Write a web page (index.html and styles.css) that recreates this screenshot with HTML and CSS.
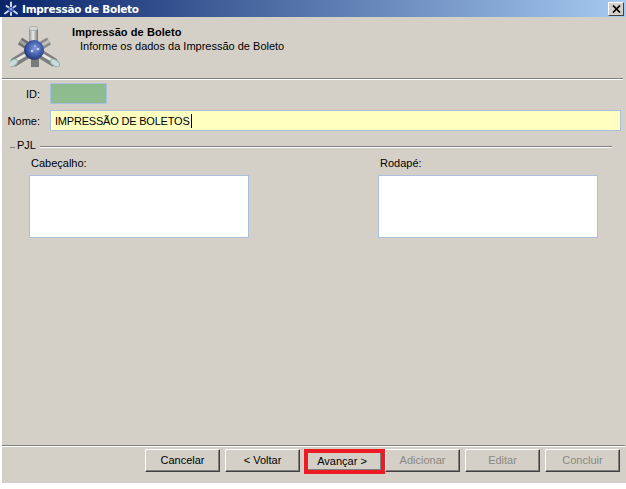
FILE: index.html
```html
<!DOCTYPE html>
<html lang="pt">
<head>
<meta charset="utf-8">
<title>Impressão de Boleto</title>
<link rel="stylesheet" href="styles.css">
</head>
<body>
<div class="window">
  <div class="titlebar">
    <svg class="title-icon" width="16" height="16" viewBox="0 0 16 16">
      <g stroke="#cfd8ea" stroke-width="2" stroke-linecap="round" fill="none">
        <path d="M8 8V1.500M8 8 3.500 5M8 8l4.500-3M8 8 2 12.500M8 8l6 4.500M8 8v6"/>
      </g>
      <circle cx="8" cy="8.500" r="2.800" fill="#3f5fb8"/>
      <circle cx="8" cy="8" r="1" fill="#a9bdf0"/>
    </svg>
    <span class="title-text">Impressão de Boleto</span>
    <span class="close-btn">
      <svg width="9" height="8" viewBox="0 0 9 8"><path d="M1 0.500 8 7.500M8 0.500 1 7.500" stroke="#000" stroke-width="1.700" fill="none"/></svg>
    </span>
  </div>
  <header class="banner">
    <svg class="logo" width="50" height="50" viewBox="10 24 50 50">
      <defs>
        <radialGradient id="ball" cx=".55" cy=".42" r=".62">
          <stop offset="0" stop-color="#7f9be0"/><stop offset=".6" stop-color="#3f5ba8"/><stop offset="1" stop-color="#1e2d66"/>
        </radialGradient>
        <linearGradient id="rodV" x1="0" x2="1" y1="0" y2="0">
          <stop offset="0" stop-color="#8f8f8d"/><stop offset=".45" stop-color="#ecece9"/><stop offset="1" stop-color="#737371"/>
        </linearGradient>
      </defs>
      <g fill="none">
        <path d="M34 50 20 41" stroke="#6f6f6d" stroke-width="8"/>
        <path d="M34 50 20 41" stroke="#a2a2a0" stroke-width="3"/>
        <path d="M34 50 49 41" stroke="#8a8a88" stroke-width="8"/>
        <path d="M34 50 49 41" stroke="#c2c2c0" stroke-width="3"/>
        <path d="M34 50 13 63" stroke="#7d7d7b" stroke-width="9"/>
        <path d="M34 50 13 62" stroke="#e6e6e3" stroke-width="3"/>
        <path d="M34 50 55 63" stroke="#7d7d7b" stroke-width="9"/>
        <path d="M34 50 55 62" stroke="#e6e6e3" stroke-width="3"/>
        <path d="M35 50V67" stroke="#7a7a78" stroke-width="8"/>
      </g>
      <ellipse cx="13" cy="63" rx="3" ry="5" transform="rotate(58 13 63)" fill="#c9dcdc" stroke="#8fb0b0"/>
      <ellipse cx="55" cy="63" rx="3" ry="5" transform="rotate(-58 55 63)" fill="#c9dcdc" stroke="#8fb0b0"/>
      <rect x="29" y="28" width="9" height="22" fill="url(#rodV)"/>
      <ellipse cx="33.500" cy="28.500" rx="4.500" ry="2" fill="#d9d9d6" stroke="#8f9f9f" stroke-width=".7"/>
      <circle cx="34" cy="50" r="10" fill="url(#ball)"/>
      <circle cx="32" cy="51" r="1.300" fill="#c6d3f5"/>
      <circle cx="38" cy="49" r="1.300" fill="#c6d3f5"/>
      <circle cx="35" cy="46" r="1" fill="#a9bdf0"/>
    </svg>
    <div class="banner-text">
      <div class="banner-title">Impressão de Boleto</div>
      <div class="banner-sub">Informe os dados da Impressão de Boleto</div>
    </div>
  </header>
  <div class="rule rule-top"></div>
  <main class="body">
    <div class="row row-id">
      <label class="label">ID:</label>
      <div class="field field-id"></div>
    </div>
    <div class="row row-name">
      <label class="label">Nome:</label>
      <div class="field field-name">IMPRESSÃO DE BOLETOS<span class="caret"></span></div>
    </div>
    <div class="group-head">
      <span class="group-dash"></span>
      <span class="group-title">PJL</span>
      <span class="group-line"></span>
    </div>
    <div class="columns">
      <div class="col">
        <div class="col-label">Cabeçalho:</div>
        <div class="field memo"></div>
      </div>
      <div class="col">
        <div class="col-label">Rodapé:</div>
        <div class="field memo"></div>
      </div>
    </div>
  </main>
  <div class="rule"></div>
  <footer class="buttons">
    <button class="btn">Cancelar</button>
    <button class="btn">&lt; Voltar</button>
    <span class="highlight"><button class="btn btn-inner">Avançar &gt;</button></span>
    <button class="btn" disabled>Adicionar</button>
    <button class="btn" disabled>Editar</button>
    <button class="btn" disabled>Concluir</button>
  </footer>
</div>
</body>
</html>
```
FILE: styles.css
```css
* { box-sizing: border-box; }
html, body { margin: 0; padding: 0; background: #fff; }
body { width: 626px; height: 489px; overflow: hidden; font: 11px/14px "Liberation Sans", Arial, sans-serif; color: #000; }
.window { margin-left: 2px; width: 624px; height: 483px; background: #d4d0c8; display: flex; flex-direction: column; }
.titlebar { height: 17px; flex: none; margin-left: -2px; width: 626px; background: linear-gradient(90deg, #0a246a 0%, #a6caf0 100%); display: flex; align-items: center; padding: 0 2px 0 3px; }
.title-icon { flex: none; margin-right: 3px; }
.title-text { font: bold 10.5px/14px "DejaVu Sans", sans-serif; color: #fff; flex: 1; letter-spacing: -.25px; }
.close-btn { width: 16px; height: 14px; background: #d4d0c8; border: 1px solid; border-color: #fff #404040 #404040 #fff; display: flex; align-items: center; justify-content: center; }
.banner { height: 61px; flex: none; display: flex; padding-left: 8px; }
.logo { margin-top: 7px; flex: none; }
.banner-text { margin-left: 12px; padding-top: 8px; }
.banner-title { font-weight: bold; letter-spacing: .07px; }
.banner-sub { margin-left: 8px; }
.rule { height: 2px; flex: none; background: #808080; border-bottom: 1px solid #fff; margin-right: 1px; }
.rule-top { margin-right: 3px; }
.body { flex: 1; min-height: 0; padding-top: 3px; }
.row { display: flex; align-items: center; }
.row-id { height: 21px; }
.row-name { height: 21px; margin-top: 6px; }
.label { width: 48px; flex: none; text-align: right; padding-right: 10px; }
.field { border: 1px solid #a9bfe0; background: #fff; }
.field-id { width: 57px; height: 21px; background: #8fbc8f; }
.field-name { width: 571px; height: 21px; background: #ffffc0; padding: 2px 4px; white-space: nowrap; display: flex; align-items: center; letter-spacing: -.2px; }
.caret { width: 1px; height: 14px; background: #000; margin-left: 1px; }
.group-head { display: flex; margin-top: 7px; height: 14px; padding-left: 8px; }
.group-dash { width: 5px; height: 1px; margin-top: 9px; background: #808080; }
.group-title { margin: 0 4px 0 2px; }
.group-line { width: 572px; height: 2px; margin-top: 8px; background: #808080; border-bottom: 1px solid #fff; }
.columns { display: flex; padding-left: 27px; gap: 129px; margin-top: 4px; }
.col { width: 220px; }
.col-label { height: 14px; padding-left: 2px; margin-bottom: 5px; }
.memo { height: 63px; }
.buttons { flex: none; height: 36px; display: flex; padding: 2px 0 0 143px; gap: 5px; align-items: flex-start; }
.btn { width: 75px; height: 23px; padding: 0 0 1px; font: 11px/14px "Liberation Sans", Arial, sans-serif; color: #000; background: #d4d0c8; border: 1px solid; border-color: #fff #404040 #404040 #fff; box-shadow: inset -1px -1px 0 #808080; }
.btn:disabled { color: #8a8880; }
.highlight { display: block; flex: none; width: 81px; height: 25px; margin: 0 -5px 0 -1px; border: 4px solid #ed1c24; background: #d4d0c8; overflow: hidden; }
.btn-inner { width: 73px; height: 17px; display: block; border: 0; padding-right: 5px; box-shadow: inset -1px -1px 0 #808080; }
```
